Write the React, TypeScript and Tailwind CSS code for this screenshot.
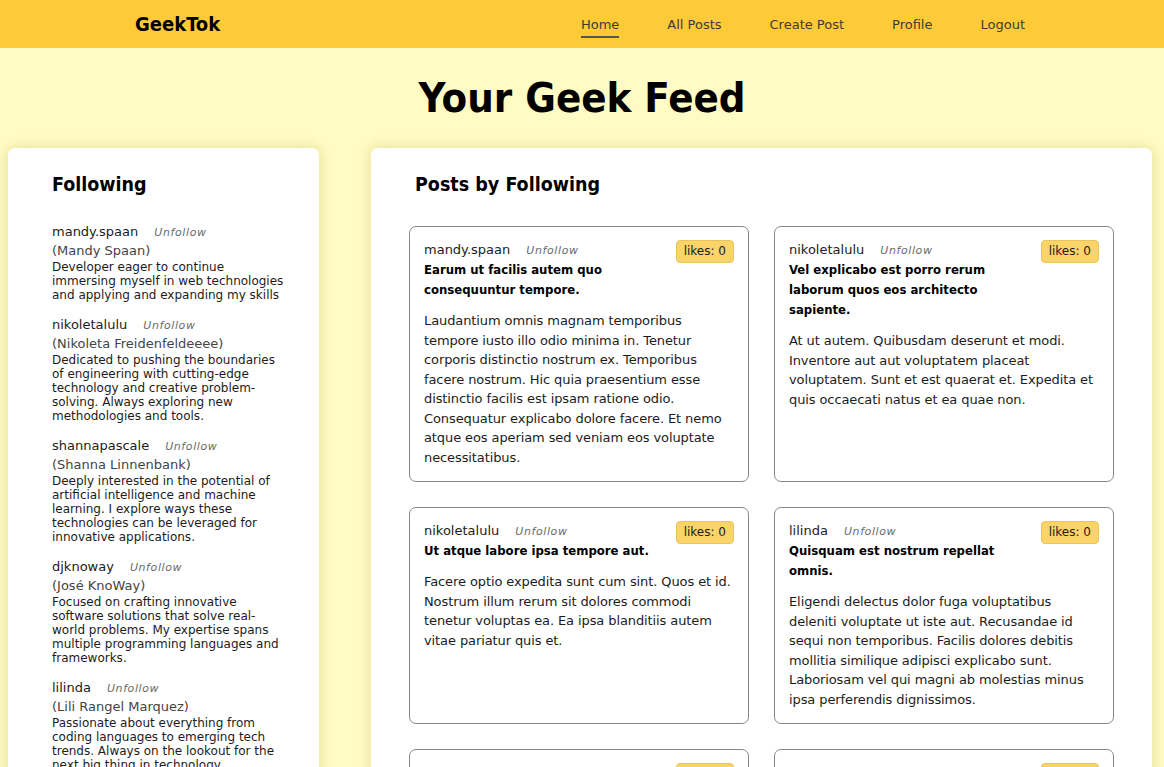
import React from 'react';

const following = [
  {
    username: 'mandy.spaan',
    name: 'Mandy Spaan',
    bio: 'Developer eager to continue immersing myself in web technologies and applying and expanding my skills',
  },
  {
    username: 'nikoletalulu',
    name: 'Nikoleta Freidenfeldeeee',
    bio: 'Dedicated to pushing the boundaries of engineering with cutting-edge technology and creative problem-solving. Always exploring new methodologies and tools.',
  },
  {
    username: 'shannapascale',
    name: 'Shanna Linnenbank',
    bio: 'Deeply interested in the potential of artificial intelligence and machine learning. I explore ways these technologies can be leveraged for innovative applications.',
  },
  {
    username: 'djknoway',
    name: 'José KnoWay',
    bio: 'Focused on crafting innovative software solutions that solve real-world problems. My expertise spans multiple programming languages and frameworks.',
  },
  {
    username: 'lilinda',
    name: 'Lili Rangel Marquez',
    bio: 'Passionate about everything from coding languages to emerging tech trends. Always on the lookout for the next big thing in technology.',
  },
];

const posts = [
  {
    username: 'mandy.spaan',
    title: 'Earum ut facilis autem quo consequuntur tempore.',
    body: 'Laudantium omnis magnam temporibus tempore iusto illo odio minima in. Tenetur corporis distinctio nostrum ex. Temporibus facere nostrum. Hic quia praesentium esse distinctio facilis est ipsam ratione odio. Consequatur explicabo dolore facere. Et nemo atque eos aperiam sed veniam eos voluptate necessitatibus.',
  },
  {
    username: 'nikoletalulu',
    title: 'Vel explicabo est porro rerum laborum quos eos architecto sapiente.',
    body: 'At ut autem. Quibusdam deserunt et modi. Inventore aut aut voluptatem placeat voluptatem. Sunt et est quaerat et. Expedita et quis occaecati natus et ea quae non.',
  },
  {
    username: 'nikoletalulu',
    title: 'Ut atque labore ipsa tempore aut.',
    body: 'Facere optio expedita sunt cum sint. Quos et id. Nostrum illum rerum sit dolores commodi tenetur voluptas ea. Ea ipsa blanditiis autem vitae pariatur quis et.',
  },
  {
    username: 'lilinda',
    title: 'Quisquam est nostrum repellat omnis.',
    body: 'Eligendi delectus dolor fuga voluptatibus deleniti voluptate ut iste aut. Recusandae id sequi non temporibus. Facilis dolores debitis mollitia similique adipisci explicabo sunt. Laboriosam vel qui magni ab molestias minus ipsa perferendis dignissimos.',
  },
  {
    username: 'djknoway',
    title: 'Dolorem aut sit voluptas.',
    body: 'Sit quia ut minus. Aut et dolorem rerum voluptatem ut. Quis sint et.',
  },
  {
    username: 'shannapascale',
    title: 'Numquam ut et quia.',
    body: 'Nihil occaecati est consequatur et. Et ut dolor sed aut quia.',
  },
];

const bold = "font-['DejaVu_Sans_Condensed','DejaVu_Sans',sans-serif] font-bold";

function Unfollow() {
  return (
    <button className="ml-[16px] text-[11px] italic tracking-[0.6px] text-[#6b6b6b]">Unfollow</button>
  );
}

function PostCard({ post }: { post: (typeof posts)[number] }) {
  return (
    <div className="bg-white border border-[#888] rounded-[7px] p-[14px]">
      <div className="flex items-start gap-3">
        <div className="flex-1">
          <div className="flex items-baseline leading-[18px]">
            <span className="text-[13px] text-[#1c1c1c]">{post.username}</span>
            <Unfollow />
          </div>
          <h3 className={`${bold} text-[13px] leading-[20px] text-black`}>{post.title}</h3>
        </div>
        <span className="mt-[-1px] bg-[#f9d468] border border-[#e9c45e] rounded-[4px] px-[7px] py-[3px] text-[12px] leading-[15px] text-[#1c1c1c]">
          likes: 0
        </span>
      </div>
      <p className="mt-[11px] text-[13px] leading-[19.5px] tracking-[-0.1px] text-[#1c1c1c]">{post.body}</p>
    </div>
  );
}

export default function App() {
  return (
    <div className="min-h-screen bg-[#fefbc5] font-['DejaVu_Sans',sans-serif] text-[#1c1c1c]">
      <nav className="bg-[#ffca38] h-12 flex items-center justify-between pl-[135px] pr-[139px]">
        <span className={`${bold} text-[20px] text-black`}>GeekTok</span>
        <div className="flex items-center gap-[48px] text-[13px] text-[#3a3a3a] pt-[2px]">
          <a className="border-b-2 border-[#555] pb-[1px] mt-[3px] ml-[1px]">Home</a>
          <a>All Posts</a>
          <a>Create Post</a>
          <a>Profile</a>
          <a>Logout</a>
        </div>
      </nav>

      <h1 className={`${bold} text-center text-[41.5px] leading-[48px] text-black py-[26px]`}>Your Geek Feed</h1>

      <div className="flex items-start gap-[52px] pl-2">
        <aside className="w-[311px] shrink-0 bg-white rounded-[7px] shadow-[0_0_14px_rgba(190,180,70,0.4)] pl-[44px] pt-[23px] pb-8">
          <h2 className={`${bold} text-[19.5px] leading-[28px] text-black`}>Following</h2>
          <ul className="mt-[24px] flex flex-col gap-[14px]">
            {following.map((f) => (
              <li key={f.username}>
                <div className="flex items-baseline leading-[18px]">
                  <span className="text-[13px] text-[#1c1c1c]">{f.username}</span>
                  <Unfollow />
                </div>
                <div className="text-[13px] leading-[18px] text-[#444]">({f.name})</div>
                <p className="w-[232px] text-[12px] leading-[14px] text-[#1c1c1c]">{f.bio}</p>
              </li>
            ))}
          </ul>
        </aside>

        <main className="w-[781px] shrink-0 bg-white rounded-[7px] shadow-[0_0_14px_rgba(190,180,70,0.4)] px-[38px] pt-[23px] pb-8">
          <h2 className={`${bold} ml-[6px] text-[19.5px] leading-[28px] text-black`}>Posts by Following</h2>
          <div className="mt-[27px] grid grid-cols-2 gap-[25px]">
            {posts.map((p, i) => (
              <PostCard key={i} post={p} />
            ))}
          </div>
        </main>
      </div>
    </div>
  );
}
